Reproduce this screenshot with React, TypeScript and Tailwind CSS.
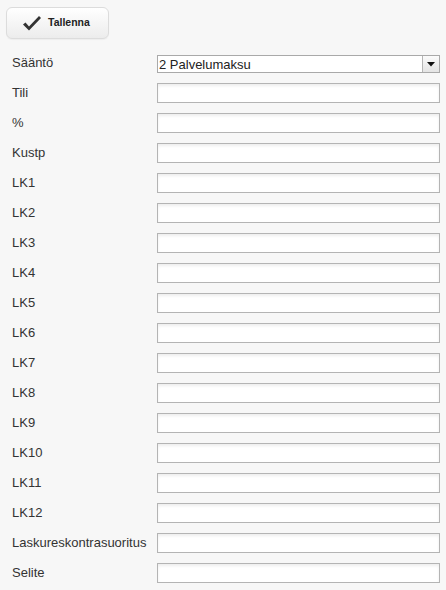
import React from "react";

const rows = [
  "Tili",
  "%",
  "Kustp",
  "LK1",
  "LK2",
  "LK3",
  "LK4",
  "LK5",
  "LK6",
  "LK7",
  "LK8",
  "LK9",
  "LK10",
  "LK11",
  "LK12",
  "Laskureskontrasuoritus",
  "Selite",
];

export default function App() {
  return (
    <div className="min-h-screen bg-[#f7f7f7] font-['Liberation_Sans',Arial,sans-serif] text-[13px] text-[#333]">
      <div className="pl-[6px] pt-[7px]">
        <button className="flex h-[32px] w-[103px] items-center rounded-[6px] border border-[#dcdcdc] bg-gradient-to-b from-[#ffffff] to-[#ececec] pl-[15px] shadow-[0_1px_1px_rgba(0,0,0,0.04)]">
          <svg width="20" height="17" viewBox="0 0 20 17" className="mr-[6px]">
            <path
              d="M1 9.5 L3.5 7.5 L7 11.5 L17 1 L19 3 L7 15.5 Z"
              fill="#333"
            />
          </svg>
          <span className="text-[10.5px] font-bold text-[#222]">Tallenna</span>
        </button>
      </div>
      <div className="mt-[9px]">
        <div className="flex h-[30px] items-start">
          <div className="flex h-[30px] w-[157px] items-center pl-[12px]">Sääntö</div>
          <div className="mt-[7px] flex h-[18px] w-[283px] border border-[#a9a9a9] bg-white">
            <div className="flex flex-1 items-center pl-px leading-none text-[#222]">2 Palvelumaksu</div>
            <div className="flex w-[17px] items-center justify-center border-l border-[#b5b5b5] bg-gradient-to-b from-[#fbfbfb] to-[#e4e4e4]">
              <svg width="8" height="5" viewBox="0 0 8 5">
                <path d="M0 0 H8 L4 4.5 Z" fill="#111" />
              </svg>
            </div>
          </div>
        </div>
        {rows.map((r) => (
          <div key={r} className="flex h-[30px] items-center">
            <div className="w-[157px] pl-[12px]">{r}</div>
            <div className="h-[20px] w-[283px] border border-[#b4b4b4] bg-white shadow-[inset_0_2px_3px_rgba(0,0,0,0.07)]" />
          </div>
        ))}
      </div>
    </div>
  );
}
